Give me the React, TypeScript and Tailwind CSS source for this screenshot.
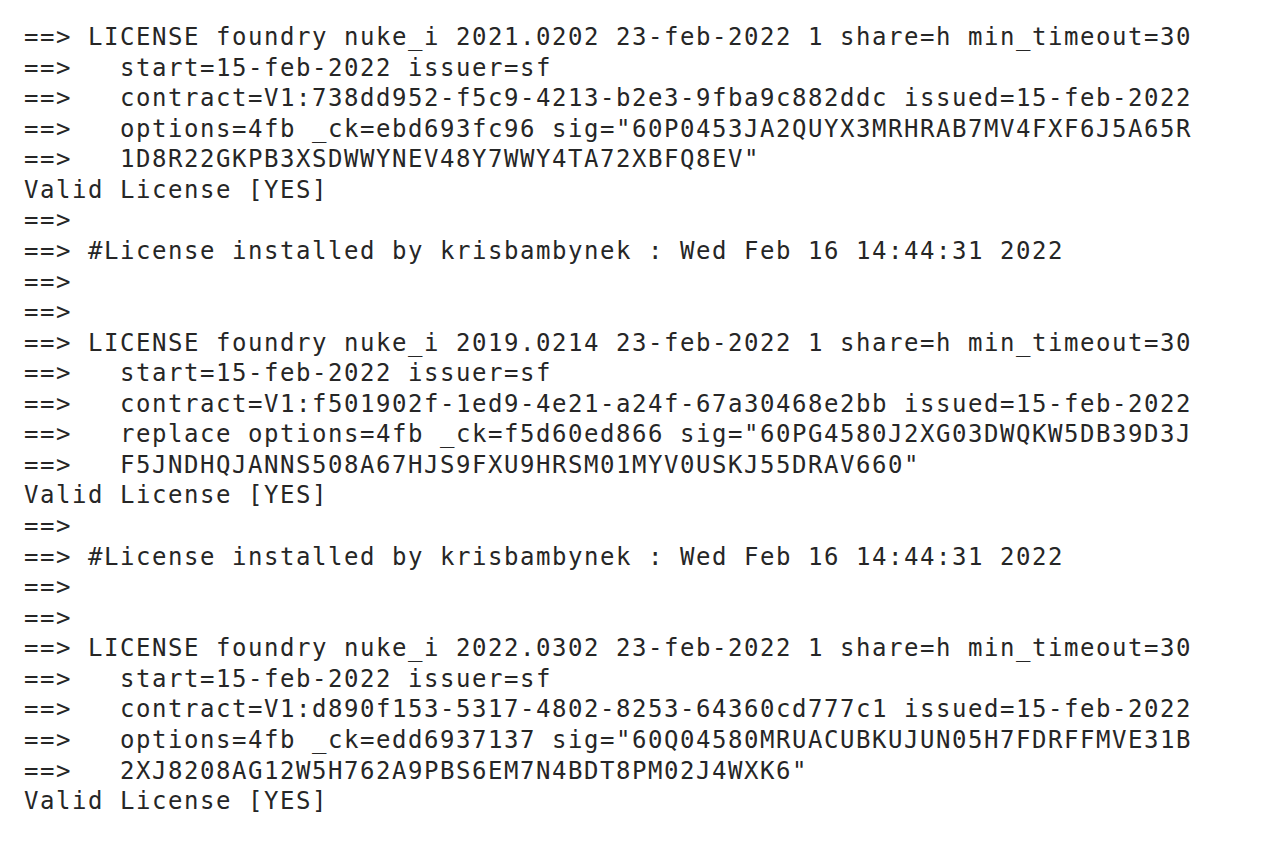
const lines = [
  "==> LICENSE foundry nuke_i 2021.0202 23-feb-2022 1 share=h min_timeout=30",
  "==>   start=15-feb-2022 issuer=sf",
  "==>   contract=V1:738dd952-f5c9-4213-b2e3-9fba9c882ddc issued=15-feb-2022",
  '==>   options=4fb _ck=ebd693fc96 sig="60P0453JA2QUYX3MRHRAB7MV4FXF6J5A65R',
  '==>   1D8R22GKPB3XSDWWYNEV48Y7WWY4TA72XBFQ8EV"',
  "Valid License [YES]",
  "==>",
  "==> #License installed by krisbambynek : Wed Feb 16 14:44:31 2022",
  "==>",
  "==>",
  "==> LICENSE foundry nuke_i 2019.0214 23-feb-2022 1 share=h min_timeout=30",
  "==>   start=15-feb-2022 issuer=sf",
  "==>   contract=V1:f501902f-1ed9-4e21-a24f-67a30468e2bb issued=15-feb-2022",
  '==>   replace options=4fb _ck=f5d60ed866 sig="60PG4580J2XG03DWQKW5DB39D3J',
  '==>   F5JNDHQJANNS508A67HJS9FXU9HRSM01MYV0USKJ55DRAV660"',
  "Valid License [YES]",
  "==>",
  "==> #License installed by krisbambynek : Wed Feb 16 14:44:31 2022",
  "==>",
  "==>",
  "==> LICENSE foundry nuke_i 2022.0302 23-feb-2022 1 share=h min_timeout=30",
  "==>   start=15-feb-2022 issuer=sf",
  "==>   contract=V1:d890f153-5317-4802-8253-64360cd777c1 issued=15-feb-2022",
  '==>   options=4fb _ck=edd6937137 sig="60Q04580MRUACUBKUJUN05H7FDRFFMVE31B',
  '==>   2XJ8208AG12W5H762A9PBS6EM7N4BDT8PM02J4WXK6"',
  "Valid License [YES]",
];

export default function App() {
  return (
    <div className="min-h-[850px] w-full bg-white pl-[24px] pt-[22px] text-[#262626]">
      <pre className="font-['DejaVu_Sans_Mono',monospace] text-[24px] leading-[30.56px] tracking-[1.55px]">
        {lines.map((line, i) => (
          <div key={i} className="whitespace-pre">
            {line}
          </div>
        ))}
      </pre>
    </div>
  );
}
